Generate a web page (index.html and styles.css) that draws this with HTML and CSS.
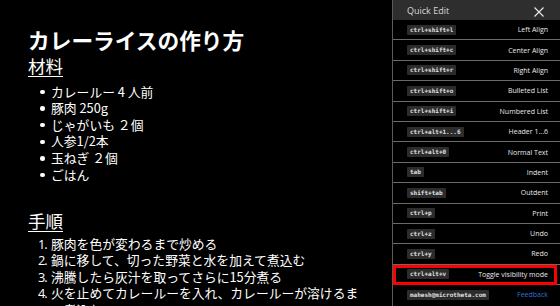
FILE: index.html
```html
<!DOCTYPE html>
<html lang="ja">
    <head>
        <meta charset="utf-8" />
        <title>カレーライスの作り方</title>
        <link rel="stylesheet" href="styles.css">
    </head>
    <body>
        <div class="page">
            <div class="doc">
                <h1>カレーライスの作り方</h1>
                <h2>材料</h2>
                <ul>
                    <li>カレールー 4 人前</li>
                    <li>豚肉 250g</li>
                    <li>じゃがいも ２個</li>
                    <li>人参1/2本</li>
                    <li>玉ねぎ ２個</li>
                    <li>ごはん</li>
                </ul>
                <h2 class="steps-title">手順</h2>
                <ol>
                    <li><span>豚肉を色が変わるまで炒める</span></li>
                    <li><span>鍋に移して、切った野菜と水を加えて煮込む</span></li>
                    <li><span>沸騰したら灰汁を取ってさらに15分煮る</span></li>
                    <li><span>火を止めてカレールーを入れ、カレールーが溶けるまで煮込む</span></li>
                </ol>
            </div>
            <div class="quick-edit">
                <div class="qe-header">
                    <span class="qe-title">Quick Edit</span>
                    <svg class="qe-close" width="10" height="10" viewBox="0 0 10 10">
                        <path d="M0.5 0.5 L9.5 9.5 M9.5 0.5 L0.5 9.5" stroke="#e6e6e6" stroke-width="1.2" fill="none"/>
                    </svg>
                </div>
                <div class="qe-row"><span class="kbd">ctrl+shift+l</span><span class="qe-label">Left Align</span></div>
                <div class="qe-row"><span class="kbd">ctrl+shift+c</span><span class="qe-label">Center Align</span></div>
                <div class="qe-row"><span class="kbd">ctrl+shift+r</span><span class="qe-label">Right Align</span></div>
                <div class="qe-row"><span class="kbd">ctrl+shift+o</span><span class="qe-label">Bulleted List</span></div>
                <div class="qe-row"><span class="kbd">ctrl+shift+i</span><span class="qe-label">Numbered List</span></div>
                <div class="qe-row"><span class="kbd">ctrl+alt+1...6</span><span class="qe-label">Header 1...6</span></div>
                <div class="qe-row"><span class="kbd">ctrl+alt+0</span><span class="qe-label">Normal Text</span></div>
                <div class="qe-row"><span class="kbd">tab</span><span class="qe-label">Indent</span></div>
                <div class="qe-row"><span class="kbd">shift+tab</span><span class="qe-label">Outdent</span></div>
                <div class="qe-row"><span class="kbd">ctrl+p</span><span class="qe-label">Print</span></div>
                <div class="qe-row"><span class="kbd">ctrl+z</span><span class="qe-label">Undo</span></div>
                <div class="qe-row"><span class="kbd">ctrl+y</span><span class="qe-label">Redo</span></div>
                <div class="qe-row highlighted"><span class="kbd">ctrl+alt+v</span><span class="qe-label">Toggle visibility mode</span></div>
                <div class="qe-row last"><span class="kbd">mahesh@microtheta.com</span><a class="qe-link" href="#">Feedback</a></div>
            </div>
        </div>
    </body>
</html>
```

FILE: styles.css
```css
html, body {
    margin: 0;
    height: 100%;
    background: #000000;
    overflow: hidden;
}
.page {
    display: flex;
    height: 306px;
    color: #ffffff;
    font-family: "Noto Sans CJK JP", "Noto Sans", sans-serif;
}
.doc {
    flex: 1;
    min-width: 0;
    padding: 27px 26px 0 28px;
    overflow: hidden;
}
h1 {
    margin: 0;
    font-size: 21.7px;
    line-height: 26px;
    font-weight: bold;
}
h2 {
    margin: 2px 0 0;
    font-size: 17.5px;
    line-height: 22px;
    font-weight: normal;
    text-decoration: underline;
    text-underline-offset: 3px;
}
.steps-title {
    margin-top: 26.7px;
}
ul, ol {
    margin: 6.7px 0 0;
    list-style: none;
    font-size: 12.8px;
    line-height: 16.6px;
}
ul {
    padding-left: 12px;
}
ul li {
    display: flex;
    align-items: center;
}
ul li::before {
    content: "";
    width: 4.5px;
    height: 4.5px;
    margin-right: 6.5px;
    border-radius: 50%;
    background: #ffffff;
}
ol {
    margin-top: 3.7px;
    padding-left: 10px;
    counter-reset: step;
}
ol li {
    display: flex;
    counter-increment: step;
}
ol li::before {
    content: counter(step) ".";
    flex: none;
    width: 13px;
    font-family: "Open Sans", sans-serif;
    letter-spacing: -1px;
}

/* quick edit panel */
.quick-edit {
    width: 167px;
    border-left: 1px solid #5a5a5a;
    background: #000000;
    font-family: "Open Sans", "Liberation Sans", sans-serif;
}
.qe-header {
    display: flex;
    align-items: center;
    justify-content: space-between;
    height: 20px;
    padding: 0 16px 0 14px;
    background: #2e2e2e;
}
.qe-title {
    font-size: 9px;
    color: #d8d8d8;
}
.qe-close {
    display: block;
    margin-top: 4px;
}
.qe-row {
    position: relative;
    display: flex;
    align-items: center;
    justify-content: space-between;
    height: 19.4px;
    padding: 0 12px 0 14px;
    border-bottom: 1px solid #6a6a6a;
}
.qe-row.last {
    border-bottom: none;
}
.kbd {
    padding: 0 3px;
    background: #2c2c2c;
    color: #e0e0e0;
    font-family: "DejaVu Sans Mono", monospace;
    font-size: 6px;
    font-weight: bold;
    line-height: 10px;
    border-radius: 1px;
}
.qe-label {
    font-size: 7px;
    color: #e8e8e8;
}
.qe-link {
    font-size: 7px;
    color: #2f74d0;
    text-decoration: none;
}
.highlighted::after {
    content: "";
    position: absolute;
    top: 0;
    left: 0;
    right: 3px;
    bottom: -1px;
    border: 3px solid #ff0000;
}
```
